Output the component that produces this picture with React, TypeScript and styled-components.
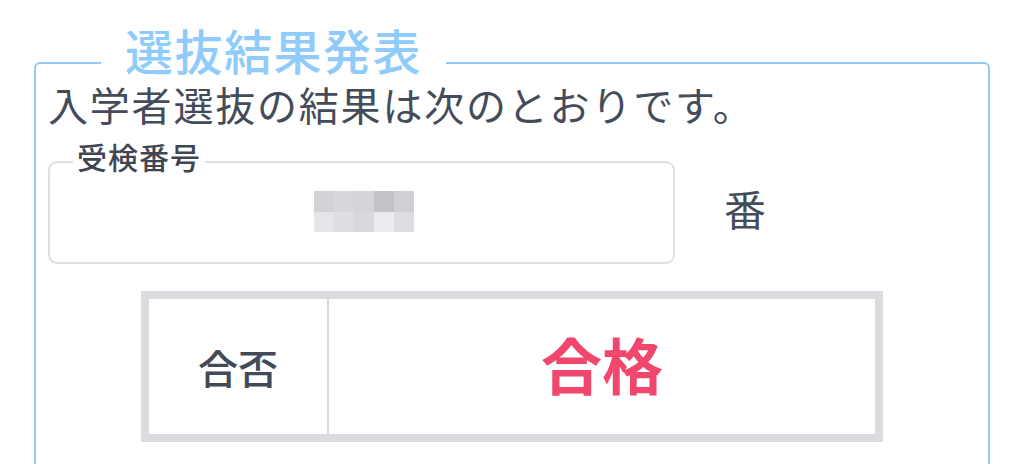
import styled, { createGlobalStyle } from "styled-components";

const GlobalStyle = createGlobalStyle`
  body {
    margin: 0;
    background: #ffffff;
    font-family: "Noto Sans CJK JP", "Noto Sans", sans-serif;
    color: #454c59;
  }
`;

const Page = styled.div`
  padding: 50px 34px 0;
`;

const ResultFrame = styled.fieldset`
  margin: 0;
  padding: 0 12px 40px;
  min-width: 0;
  border: 2px solid #90cbfa;
  border-radius: 6px;
`;

const FrameTitle = styled.legend`
  margin-left: 53px;
  padding: 0 24px;
  font-size: 48px;
  line-height: 26px;
  font-weight: 500;
  letter-spacing: 1.5px;
  color: #8fcbfb;
  position: relative;
  top: -14px;
`;

const Lead = styled.p`
  margin: 0;
  font-size: 40px;
  line-height: 56px;
  letter-spacing: 1.8px;
`;

const NumberRow = styled.div`
  display: flex;
  align-items: center;
  margin-top: 16px;
`;

const NumberField = styled.fieldset`
  margin: 0;
  padding: 15px 0 30px;
  width: 627px;
  box-sizing: border-box;
  min-width: 0;
  border: 2px solid #dfdfe3;
  border-radius: 9px;
  display: flex;
  justify-content: center;
`;

const FieldLabel = styled.legend`
  margin-left: 23px;
  padding: 0 4px;
  font-size: 30px;
  line-height: 28px;
  font-weight: 500;
  letter-spacing: 1px;
  color: #3f4551;
  position: relative;
  top: -6px;
`;

const Mosaic = styled.div`
  display: grid;
  grid-template-columns: repeat(5, 20px);
  grid-auto-rows: 20.5px;
  margin-left: 5px;
`;

const MosaicCell = styled.span<{ $tone: string }>`
  background: ${({ $tone }) => $tone};
`;

const Unit = styled.span`
  margin-left: 49px;
  padding-top: 4px;
  font-size: 42px;
  line-height: 56px;
`;

const ResultTable = styled.table`
  width: 742px;
  margin: 27px auto 0;
  border: 8px solid #dcdce0;
  border-collapse: separate;
  border-spacing: 0;
`;

const HeadCell = styled.th`
  width: 178px;
  height: 135px;
  padding: 0;
  border-right: 2px solid #d9d9dd;
  font-size: 40px;
  font-weight: 500;
  text-align: center;
  vertical-align: middle;
  color: #434a57;
`;

const ValueCell = styled.td`
  padding: 0;
  padding-bottom: 6px;
  font-size: 61px;
  font-weight: 700;
  text-align: center;
  vertical-align: middle;
  color: #f2476d;
`;

const mosaic = [
  "#d2d3d7", "#d6d7da", "#d4d5d8", "#c2c3c7", "#cfd0d4",
  "#e4e5e7", "#dddee1", "#d8d9dc", "#ececee", "#dcdde0",
];

export default function App() {
  return (
    <>
      <GlobalStyle />
      <Page>
        <ResultFrame>
          <FrameTitle>選抜結果発表</FrameTitle>
          <Lead>入学者選抜の結果は次のとおりです。</Lead>
          <NumberRow>
            <NumberField>
              <FieldLabel>受検番号</FieldLabel>
              <Mosaic>
                {mosaic.map((c, i) => (
                  <MosaicCell key={i} $tone={c} />
                ))}
              </Mosaic>
            </NumberField>
            <Unit>番</Unit>
          </NumberRow>
          <ResultTable>
            <tbody>
              <tr>
                <HeadCell>合否</HeadCell>
                <ValueCell>合格</ValueCell>
              </tr>
            </tbody>
          </ResultTable>
        </ResultFrame>
      </Page>
    </>
  );
}
